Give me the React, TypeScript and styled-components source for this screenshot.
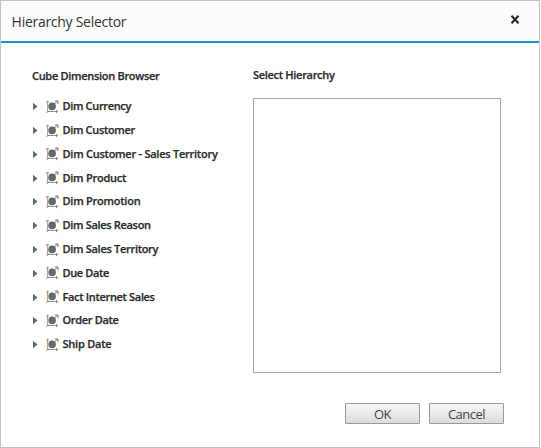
import React from "react";
import styled, { createGlobalStyle } from "styled-components";

const GlobalStyle = createGlobalStyle`
  *, *::before, *::after { box-sizing: border-box; }
  body { margin: 0; background: #fff; font-family: "Open Sans", "Noto Sans", sans-serif; }
`;

const Dialog = styled.div`
  width: 540px;
  height: 448px;
  border: 1px solid #c3c2c3;
  background: #fff;
  display: flex;
  flex-direction: column;
`;

const Header = styled.header`
  height: 42px;
  flex: none;
  display: flex;
  justify-content: space-between;
  padding: 0 19px 0 10.6px;
  background: #fcfcfc;
  border-bottom: 2px solid #1a98d5;
`;

const Title = styled.h1`
  margin: 0;
  padding-top: 11px;
  font-size: 14px;
  line-height: 20px;
  font-weight: 400;
  letter-spacing: -0.28px;
  color: #333;
  white-space: nowrap;
`;

const CloseButton = styled.button`
  width: 10px;
  height: 9px;
  margin-top: 14px;
  padding: 0;
  border: 0;
  background: none;
  svg { display: block; }
`;

const Body = styled.main`
  display: flex;
  height: 330px;
  padding-left: 31px;
`;

const Browser = styled.section`
  width: 221px;
  padding-top: 23px;
`;

const Selection = styled.section`
  padding-top: 22px;
`;

const Label = styled.span<{ $spacing?: number }>`
  display: block;
  font-size: 11px;
  line-height: 20px;
  font-weight: 600;
  letter-spacing: ${(p) => p.$spacing ?? -0.3}px;
  color: #2b2b2b;
  -webkit-text-stroke: 0.25px #2b2b2b;
  white-space: nowrap;
`;

const Tree = styled.ul`
  list-style: none;
  margin: 8.4px 0 0;
  padding: 0;
`;

const TreeRow = styled.li`
  display: flex;
  align-items: center;
  height: 23.8px;
`;

const Arrow = styled.svg`
  width: 5px;
  height: 9px;
  margin: 1px 8px 0 1px;
  flex: none;
`;

const CubeIcon = styled.svg`
  width: 14px;
  height: 14px;
  margin: 1px 2.5px 0 0;
  flex: none;
`;

const ListBox = styled.div`
  width: 248px;
  height: 275px;
  margin-top: 13px;
  border: 1px solid #a6a6a6;
  background: #fff;
`;

const Footer = styled.footer`
  display: flex;
  justify-content: flex-end;
  gap: 9px;
  padding: 30px 35px 0 0;
`;

const Button = styled.button`
  width: 75px;
  height: 21px;
  padding: 0;
  border: 1px solid #999;
  border-radius: 1px;
  background: linear-gradient(#f6f6f6, #dcdcdc);
  color: #444;
  font: 400 13px/20px "Open Sans", "Noto Sans", sans-serif;
  letter-spacing: -0.5px;
`;

const dimensions = [
  { name: "Dim Currency", spacing: -0.34 },
  { name: "Dim Customer", spacing: -0.34 },
  { name: "Dim Customer - Sales Territory", spacing: -0.25 },
  { name: "Dim Product", spacing: -0.26 },
  { name: "Dim Promotion", spacing: -0.24 },
  { name: "Dim Sales Reason", spacing: -0.32 },
  { name: "Dim Sales Territory", spacing: -0.3 },
  { name: "Due Date", spacing: -0.35 },
  { name: "Fact Internet Sales", spacing: -0.33 },
  { name: "Order Date", spacing: -0.33 },
  { name: "Ship Date", spacing: -0.22 },
];

const DimensionIcon = () => (
  <CubeIcon viewBox="0 0 14 14" fill="none">
    <path d="M1.5 1.5V12" stroke="#c99a80" />
    <path d="M.2 2.5L1.5 .8L2.8 2.5M1.5 11.5H11.5M10 10L11.8 11.5L10 13M.3 13L2.8 10.5" stroke="#808080" strokeWidth=".9" />
    <path d="M8.5 4L11.5 1.2M9 1H12V4" stroke="#777" />
    <circle cx="6.1" cy="6.4" r="3.8" fill="#686868" />
  </CubeIcon>
);

export default function App() {
  return (
    <>
      <GlobalStyle />
      <Dialog role="dialog" aria-label="Hierarchy Selector">
        <Header>
          <Title>Hierarchy Selector</Title>
          <CloseButton aria-label="Close">
            <svg width="10" height="9" viewBox="0 0 10 9">
              <path d="M1.5 .8L8.5 8.2M8.5 .8L1.5 8.2" stroke="#222" strokeWidth="2" />
            </svg>
          </CloseButton>
        </Header>
        <Body>
          <Browser>
            <Label>Cube Dimension Browser</Label>
            <Tree>
              {dimensions.map((d) => (
                <TreeRow key={d.name}>
                  <Arrow viewBox="0 0 5 9">
                    <path d="M0 .8L4.5 4.5L0 8.2Z" fill="#666" />
                  </Arrow>
                  <DimensionIcon />
                  <Label $spacing={d.spacing}>{d.name}</Label>
                </TreeRow>
              ))}
            </Tree>
          </Browser>
          <Selection>
            <Label>Select Hierarchy</Label>
            <ListBox />
          </Selection>
        </Body>
        <Footer>
          <Button>OK</Button>
          <Button>Cancel</Button>
        </Footer>
      </Dialog>
    </>
  );
}
